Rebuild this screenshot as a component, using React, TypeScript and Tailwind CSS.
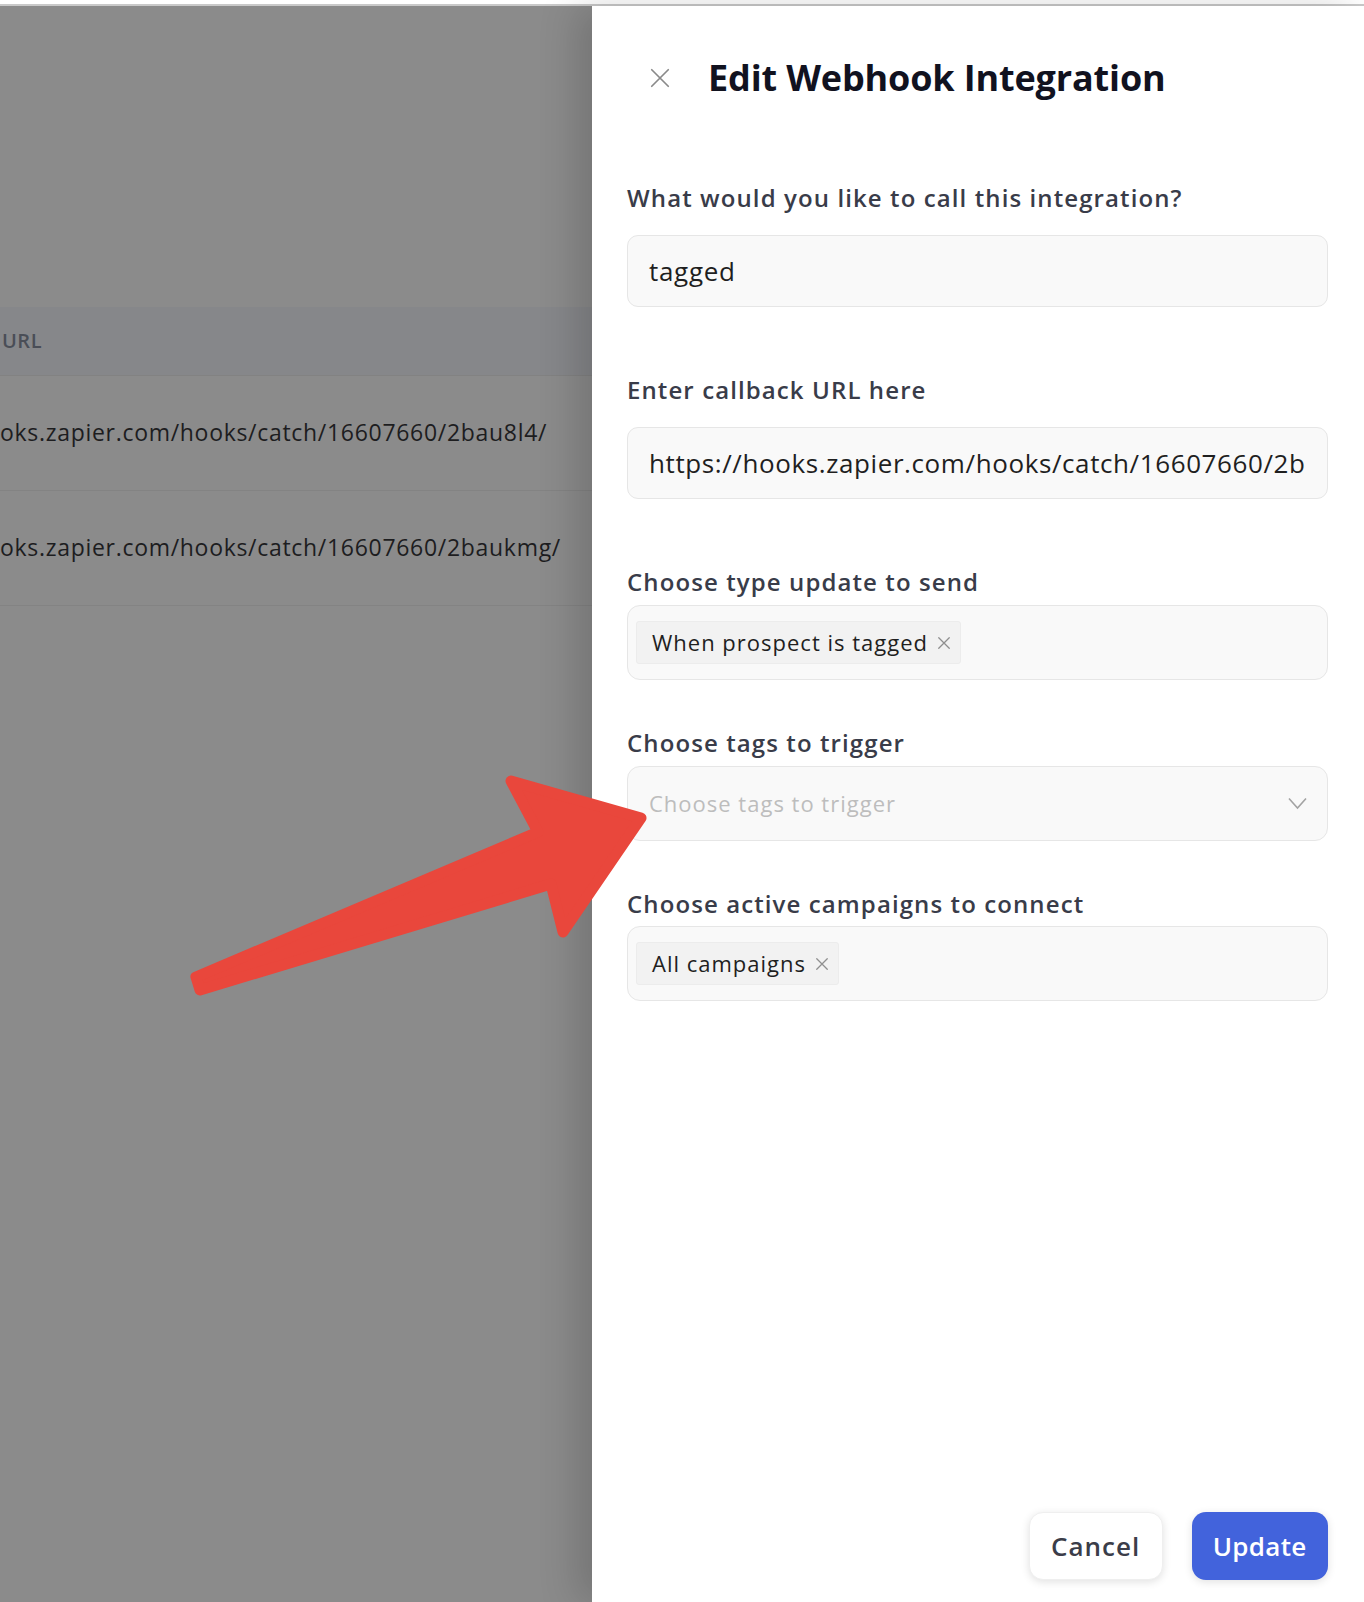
import React from 'react';

const FONT = { fontFamily: '"Open Sans", "Noto Sans", sans-serif' };

const CloseIcon: React.FC<{ size: number; stroke?: number; className?: string }> = ({ size, stroke = 2, className }) => (
  <svg width={size} height={size} viewBox="0 0 24 24" fill="none" stroke="currentColor" strokeWidth={stroke} strokeLinecap="round" className={className}>
    <path d="M3 3L21 21M21 3L3 21" />
  </svg>
);

const Chip: React.FC<{ label: string }> = ({ label }) => (
  <div className="flex items-center h-[43px] pl-[15px] pr-[9px] gap-[9px] bg-[#f2f2f2] border border-[#ececec] rounded-[3px] text-[22px] tracking-[1px] text-[#1f1f1f]">
    <span>{label}</span>
    <CloseIcon size={14} stroke={2.2} className="text-[#8f8f8f]" />
  </div>
);

const Label: React.FC<{ children: React.ReactNode; className?: string }> = ({ children, className }) => (
  <div className={`h-[32px] leading-[32px] text-[24px] font-semibold tracking-[1.1px] text-[#393c49] ${className || ''}`}>{children}</div>
);

const rows = [
  'oks.zapier.com/hooks/catch/16607660/2bau8l4/',
  'oks.zapier.com/hooks/catch/16607660/2baukmg/',
];

export default function App() {
  return (
    <div className="relative w-[1364px] h-[1602px] overflow-hidden bg-white flex flex-col" style={FONT}>
      <div className="h-[4px] bg-white" />
      <div className="h-[2px] bg-[#c9c9c9]" />
      <div className="flex flex-1">
        {/* dimmed page behind the drawer */}
        <div className="w-[592px] shrink-0 bg-[#8b8b8b] flex flex-col">
          <div className="h-[301px]" />
          <div className="h-[69px] bg-[#86878a] border-b border-[#828282] flex items-center pl-[2px] text-[20px] font-semibold tracking-[0.5px] text-[#4a4e57]">
            URL
          </div>
          {rows.map((r) => (
            <div key={r} className="h-[115px] border-b border-[#838383] flex items-center pb-[2px] overflow-hidden">
              <span className="whitespace-nowrap text-[23px] tracking-[0.7px] text-[#1d1d1f]">{r}</span>
            </div>
          ))}
        </div>

        {/* drawer */}
        <div className="relative flex-1 bg-white flex flex-col pl-[35px] pr-[37px] pb-[22px] shadow-[-16px_0_36px_rgba(0,0,0,0.16)]">
          <div className="h-[44px]" />
          <div className="h-[56px] flex items-center">
            <CloseIcon size={22} stroke={1.9} className="ml-[22px] text-[#8a8a8a]" />
            <h1 className="ml-[37px] text-[36px] font-bold tracking-[-0.15px] text-[#11121f]">Edit Webhook Integration</h1>
          </div>

          <Label className="mt-[76px]">What would you like to call this integration?</Label>
          <div className="mt-[21px] h-[72px] rounded-[11px] bg-[#f9f9f9] border border-[#e6e6e6] flex items-center px-[21px] text-[26px] tracking-[0.7px] text-[#1f1f1f]">
            tagged
          </div>

          <Label className="mt-[67px]">Enter callback URL here</Label>
          <div className="mt-[21px] h-[72px] rounded-[11px] bg-[#f9f9f9] border border-[#e6e6e6] flex items-center px-[21px] text-[26px] tracking-[0.6px] text-[#1f1f1f] overflow-hidden whitespace-nowrap">
            https://hooks.zapier.com/hooks/catch/16607660/2b
          </div>

          <Label className="mt-[67px]">Choose type update to send</Label>
          <div className="mt-[7px] h-[75px] rounded-[13px] bg-[#f9f9f9] border border-[#e6e6e6] flex items-center px-[8px]">
            <Chip label="When prospect is tagged" />
          </div>

          <Label className="mt-[47px]">Choose tags to trigger</Label>
          <div className="mt-[7px] h-[75px] rounded-[13px] bg-[#f9f9f9] border border-[#e6e6e6] flex items-center justify-between pl-[21px] pr-[20px]">
            <span className="text-[22px] tracking-[1px] text-[#bdbdbd]">Choose tags to trigger</span>
            <svg width="19" height="13" viewBox="0 0 19 13" fill="none" stroke="#a3a3a3" strokeWidth={1.6}>
              <path d="M1 1.5L9.5 11L18 1.5" />
            </svg>
          </div>

          <Label className="mt-[47px]">Choose active campaigns to connect</Label>
          <div className="mt-[6px] h-[75px] rounded-[13px] bg-[#f9f9f9] border border-[#e6e6e6] flex items-center px-[8px]">
            <Chip label="All campaigns" />
          </div>

          <div className="mt-auto flex justify-end gap-[29px]">
            <button className="h-[68px] w-[134px] rounded-[14px] bg-white border border-[#efefef] shadow-[0_2px_8px_rgba(0,0,0,0.12)] text-[26px] font-semibold tracking-[1px] text-[#3b3d49]">
              Cancel
            </button>
            <button className="h-[68px] w-[136px] rounded-[14px] bg-[#4263dc] shadow-[0_2px_8px_rgba(0,0,0,0.12)] text-[26px] font-semibold tracking-[0.3px] text-white">
              Update
            </button>
          </div>
        </div>
      </div>

      {/* annotation arrow */}
      <svg className="absolute left-0 top-0 pointer-events-none" width="1364" height="1602" viewBox="0 0 1364 1602">
        <polygon
          points="196,977 538,832 511,781 641,818 563,932 551,884 200,990"
          fill="#e9473c"
          stroke="#e9473c"
          strokeWidth={11}
          strokeLinejoin="round"
        />
      </svg>
    </div>
  );
}
